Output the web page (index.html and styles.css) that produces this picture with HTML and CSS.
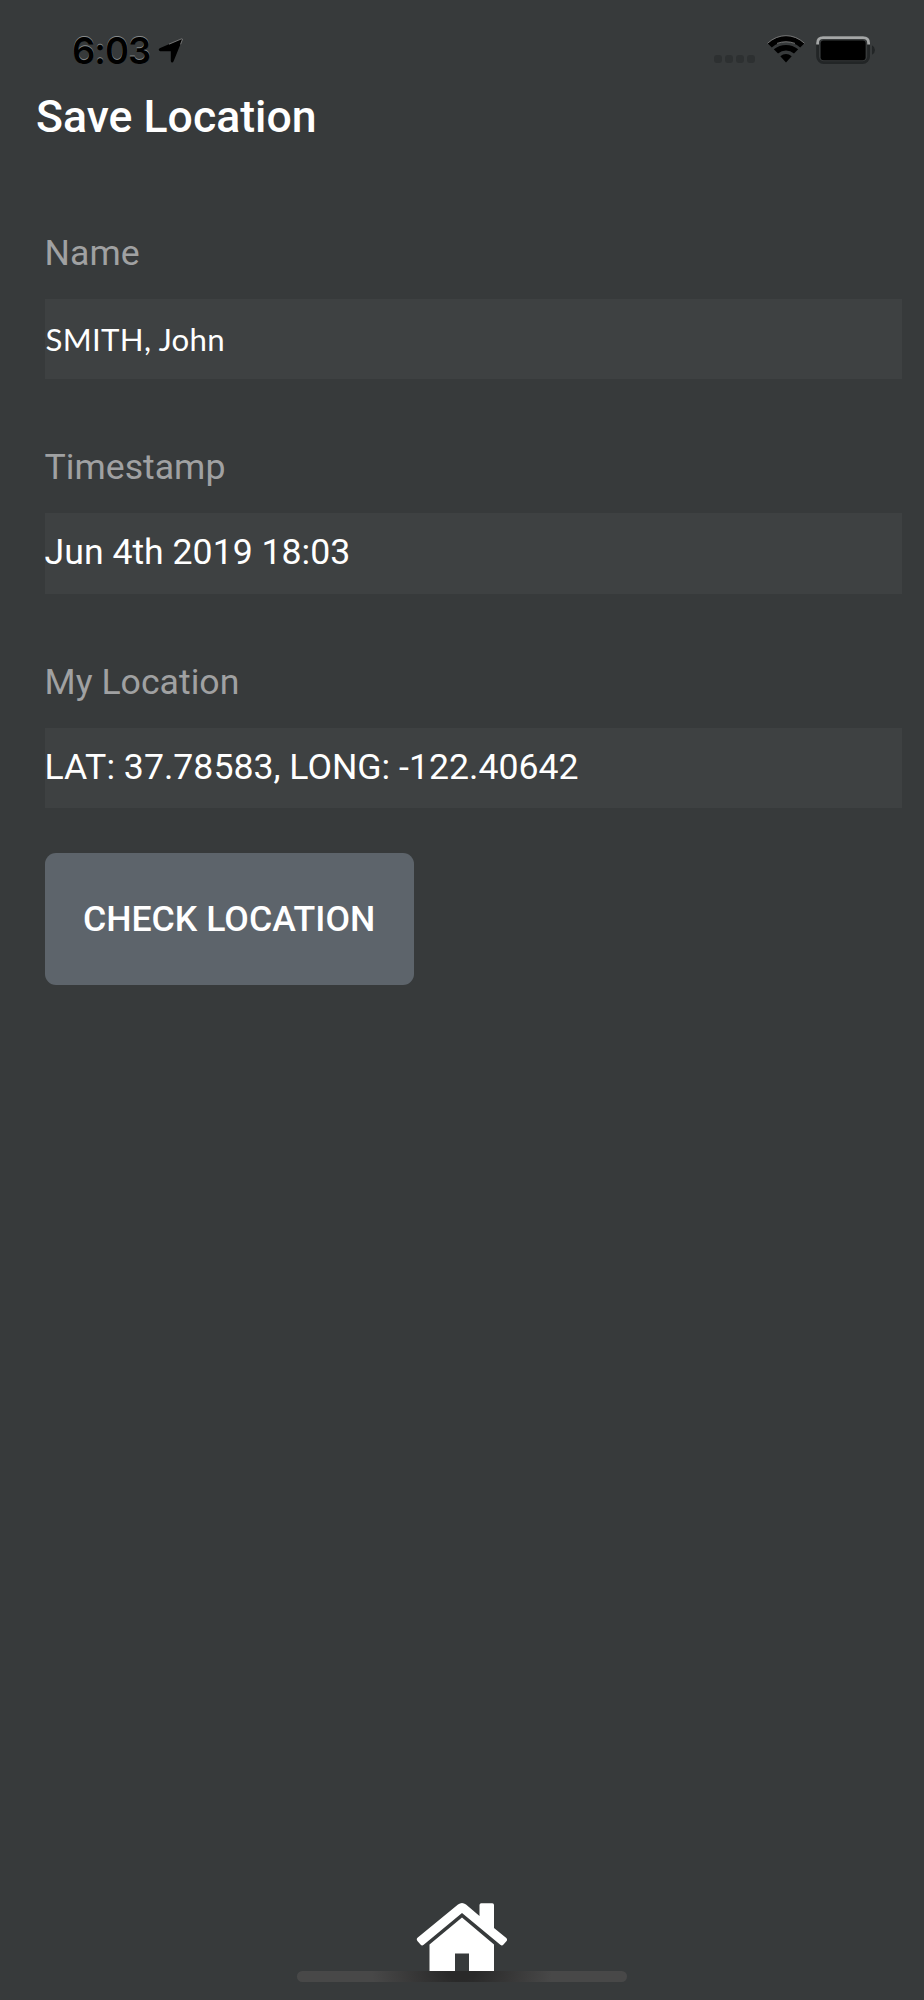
FILE: index.html
```html
<!DOCTYPE html>
<html>
<head>
	<meta charset="UTF-8">
	<title>Save Location</title>
	<link rel="stylesheet" href="styles.css">
</head>
<body>
<div class="screen">
	<div class="status">
		<span class="time">6:03</span>
		<svg class="arrow" viewBox="0 0 26 26"><path d="M24.5 1.2 15.6 23.2Q14.7 25 13.4 24.2Q12.8 23.8 12.8 22.8V13.2H2.2Q.6 13 .7 11.6Q.8 10.7 2.2 10.1L23 1.1Q24.3.7 24.5 1.2Z"/><path class="shine" d="M11 6.2 23 1.1Q24.3.7 24.5 1.2L22.5 6.4"/></svg>
		<div class="signal"><i></i><i></i><i></i><i></i></div>
		<svg class="wifi" viewBox="0 0 38 28">
			<path d="M.5 8.3Q9 .7 19 .7T37.5 8.3L33.2 12.5Q26.8 6.7 19 6.7T4.8 12.5Z"/>
			<path d="M6.8 14.3Q12.3 9.9 19 9.9T31.2 14.3L27 18.4Q23.4 15.4 19 15.4T11 18.4Z"/>
			<path d="M13.3 21.2Q16 19 19 19T24.7 21.2L19 27.6Z"/>
			<path class="shine" d="M.5 8.3Q9 .7 19 .7T37.5 8.3M10 8.4Q19 5.1 28 8.4"/>
		</svg>
		<svg class="battery" viewBox="0 0 60 28">
			<rect class="case" x="1.6" y="1.4" width="51" height="25.2" rx="6"/>
			<path class="top" d="M1.6 8.5V7Q1.6 1.6 7 1.6H47Q52.6 1.6 52.6 7V8.5"/>
			<rect x="4.6" y="4.6" width="45" height="19.6" rx="3"/>
			<path class="nub" d="M56 9.3Q59 11 59 14T56 18.7Z"/>
		</svg>
	</div>
	<h1>Save Location</h1>
	<div class="form">
		<div class="item">
			<label>Name</label>
			<div class="field name">SMITH, John</div>
		</div>
		<div class="item">
			<label>Timestamp</label>
			<div class="field">Jun 4th 2019 18:03</div>
		</div>
		<div class="item">
			<label>My Location</label>
			<div class="field">LAT: 37.78583, LONG: -122.40642</div>
		</div>
		<button>CHECK LOCATION</button>
	</div>
	<div class="footer">
		<svg class="home" viewBox="0 0 92 68">
			<path d="M13.5 68V41.5L46 14.5 78 41.5V68H53V50.5H39V68Z"/>
			<path d="M1.2 35 42 1.5Q46-1.5 50 1.5L63.5 13V2Q63.5.3 65.2.3H76.3Q78 .3 78 2V25L90.3 35Q91.6 36.5 90.6 38L87.5 41.6Q86 43.2 84.3 41.8L46 10 7.7 41.8Q6 43.2 4.5 41.6L1.4 38Q.2 36.5 1.2 35Z"/>
		</svg>
		<div class="bar"></div>
	</div>
</div>
</body>
</html>
```
FILE: styles.css
```css
body,h1{
	margin:0;
	padding:0;
}
body{
	background:#373a3b;
	color:#fff;
	font-family:Roboto,sans-serif;
}
.screen{
	height:2000px;
	display:flex;
	flex-direction:column;
	overflow:hidden;
}
.status{
	height:84px;
	padding:35px 48px 0 72px;
	box-sizing:border-box;
	display:flex;
	align-items:flex-start;
}
.time{
	width:78px;
	margin-right:8px;
	color:#000;
	font:600 36.5px/33px Inter,sans-serif;
	letter-spacing:-1px;
	white-space:nowrap;
	text-shadow:0 -1px 0 #85898a;
}
.arrow{
	width:26px;
	height:26px;
	margin-top:3px;
}
.shine{
	fill:none;
	stroke:#999;
	stroke-width:0.7;
}
.signal{
	display:flex;
	gap:3px;
	margin:20px 12px 0 auto;
}
.signal i{
	width:8px;
	height:8px;
	border-radius:3px;
	background:#2d3031;
}
.wifi{
	width:38px;
	height:28px;
	margin-right:11px;
}
.battery{
	width:60px;
	height:28px;
	margin-top:1px;
}
.case{
	fill:none;
	stroke:#222526;
	stroke-width:2.8;
}
.top{
	fill:none;
	stroke:#a5a7a7;
	stroke-width:2.8;
}
.nub{
	fill:#222526;
}
h1{
	padding-left:36px;
	font-size:44.6px;
	font-weight:500;
	line-height:66px;
}
.form{
	padding:79px 22.5px 0 44.6px;
}
.item{
	height:214.3px;
}
label{
	display:block;
	height:70px;
	color:#a0a1a2;
	font-size:35.65px;
	line-height:49.5px;
}
.field{
	height:80.4px;
	background:#3e4142;
	font-size:35.65px;
	line-height:79px;
}
.name{
	padding-left:1px;
	font-family:Lato,sans-serif;
	font-size:31.2px;
	letter-spacing:0.3px;
	line-height:81px;
}
button{
	display:block;
	width:369px;
	height:132px;
	margin-top:-19.3px;
	padding:0;
	border:0;
	border-radius:11px;
	background:#5d646b;
	color:#fff;
	font:500 35.65px/132px Roboto,sans-serif;
}
.footer{
	margin-top:auto;
	padding-bottom:18px;
	display:flex;
	flex-direction:column;
	align-items:center;
}
.home{
	width:92px;
	height:68px;
	fill:#fff;
}
.bar{
	width:330px;
	height:11px;
	border-radius:6px;
	background:radial-gradient(ellipse 90px 60px at 50% 0,#292929 15%,#484848 100%);
}
```
